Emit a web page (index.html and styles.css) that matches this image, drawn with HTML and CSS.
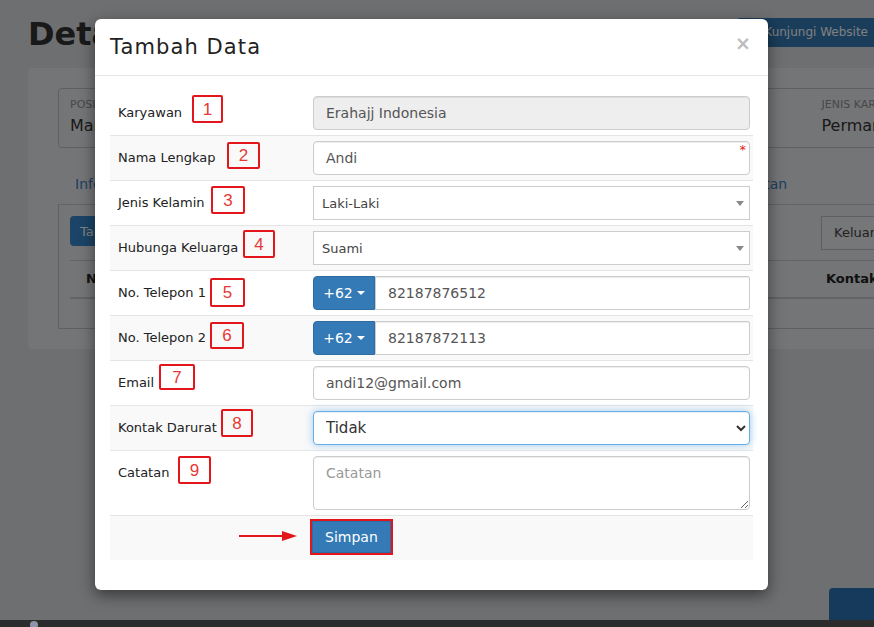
FILE: index.html
```html
<!DOCTYPE html>
<html lang="id">
<head>
<meta charset="utf-8">
<title>Detail Karyawan</title>
<link rel="stylesheet" href="styles.css">
</head>
<body>
<div class="page">
  <div class="page-head">
    <h1 class="page-title">Detail Karyawan</h1>
    <a class="btn-visit">Kunjungi Website</a>
  </div>
  <section class="card">
    <div class="info-box">
      <div class="info-item"><span class="info-label">Posisi</span><span class="info-value">Manager</span></div>
      <div class="info-item"><span class="info-label">Departemen</span><span class="info-value">Operasional</span></div>
      <div class="info-item"><span class="info-label">Tanggal Masuk</span><span class="info-value">01-01-2020</span></div>
      <div class="info-item"><span class="info-label">Jenis Karyawan</span><span class="info-value">Permanen</span></div>
    </div>
    <nav class="tabs">
      <a class="tab">Informasi Pribadi</a>
      <a class="tab">Data Keluarga</a>
      <a class="tab">Pendidikan</a>
      <a class="tab">Pengalaman Kerja</a>
      <a class="tab">Dokumen</a>
      <a class="tab">Catatan</a>
    </nav>
    <div class="tab-panel">
      <div class="panel-toolbar">
        <button class="btn-add" type="button">Tambah Data</button>
        <div class="filter">Keluarga</div>
      </div>
      <table class="data-table">
        <thead>
          <tr><th class="col-no">No</th><th class="col-name">Nama</th><th class="col-rel">Hubungan</th><th class="col-sex">Jenis Kelamin</th><th class="col-contact">Kontak Darurat</th></tr>
        </thead>
        <tbody>
          <tr><td colspan="5"></td></tr>
        </tbody>
      </table>
    </div>
  </section>
  <div class="fab"></div>
</div>

<div class="backdrop"></div>

<div class="modal" role="dialog">
  <div class="modal-header">
    <h4 class="modal-title">Tambah Data</h4>
    <button class="close" type="button">&times;</button>
  </div>
  <div class="modal-body">
    <form class="form-table">
      <div class="form-row">
        <div class="form-label">Karyawan</div>
        <div class="form-field"><input class="form-control" type="text" value="Erahajj Indonesia" disabled></div>
        <span class="mark m1">1</span>
      </div>
      <div class="form-row">
        <div class="form-label">Nama Lengkap</div>
        <div class="form-field"><input class="form-control" type="text" value="Andi"><span class="required">*</span></div>
        <span class="mark m2">2</span>
      </div>
      <div class="form-row">
        <div class="form-label">Jenis Kelamin</div>
        <div class="form-field"><div class="select2"><span>Laki-Laki</span><b class="select2-arrow"></b></div></div>
        <span class="mark m3">3</span>
      </div>
      <div class="form-row">
        <div class="form-label">Hubunga Keluarga</div>
        <div class="form-field"><div class="select2"><span>Suami</span><b class="select2-arrow"></b></div></div>
        <span class="mark m4">4</span>
      </div>
      <div class="form-row">
        <div class="form-label">No. Telepon 1</div>
        <div class="form-field">
          <div class="input-group"><button class="btn-code" type="button">+62<span class="caret"></span></button><input class="form-control" type="text" value="82187876512"></div>
        </div>
        <span class="mark m5">5</span>
      </div>
      <div class="form-row">
        <div class="form-label">No. Telepon 2</div>
        <div class="form-field">
          <div class="input-group"><button class="btn-code" type="button">+62<span class="caret"></span></button><input class="form-control" type="text" value="82187872113"></div>
        </div>
        <span class="mark m6">6</span>
      </div>
      <div class="form-row">
        <div class="form-label">Email</div>
        <div class="form-field"><input class="form-control" type="text" value="andi12@gmail.com"></div>
        <span class="mark m7">7</span>
      </div>
      <div class="form-row">
        <div class="form-label">Kontak Darurat</div>
        <div class="form-field"><select class="form-control is-focused"><option>Tidak</option><option>Ya</option></select></div>
        <span class="mark m8">8</span>
      </div>
      <div class="form-row">
        <div class="form-label">Catatan</div>
        <div class="form-field"><textarea class="form-control notes" placeholder="Catatan"></textarea></div>
        <span class="mark m9">9</span>
      </div>
      <div class="form-row actions">
        <div class="form-label"></div>
        <div class="form-field"><button class="btn-save" type="button">Simpan</button></div>
        <svg class="arrow" width="58" height="12" viewBox="0 0 58 12"><line x1="0" y1="6" x2="45" y2="6" stroke="#e3161b" stroke-width="2"/><polygon points="43,1 58,6 43,11" fill="#e3161b"/></svg>
      </div>
    </form>
  </div>
</div>

<div class="taskbar"><span class="task-icon"></span></div>
</body>
</html>
```

FILE: styles.css
```css
* { box-sizing: border-box; }
html, body { margin: 0; }
body {
  width: 874px;
  height: 627px;
  overflow: hidden;
  position: relative;
  font-family: "DejaVu Sans", sans-serif;
  background: #dcdee2;
}

/* ---------- background page ---------- */
.page { position: relative; height: 100%; }
.page-head { display: flex; align-items: flex-start; padding-top: 14px; }
.page-title {
  margin: 0 0 0 28px;
  font-size: 32px;
  line-height: 40px;
  font-weight: 600;
  color: #333;
  white-space: nowrap;
}
.btn-visit {
  margin-left: auto;
  margin-top: 4px;
  height: 29px;
  line-height: 29px;
  padding: 0 6px 0 27px;
  font-size: 12px;
  color: #fff;
  background: #337ab7;
  border-radius: 3px 0 0 3px;
  white-space: nowrap;
}
.card {
  margin: 14px 0 0 28px;
  width: 1064px;
  background: #e9ebee;
  border-radius: 4px;
  padding: 20px 30px;
}
.info-box {
  display: grid;
  grid-template-columns: repeat(4, 1fr);
  border: 1px solid #bec1c5;
  border-radius: 4px;
}
.info-item { display: flex; flex-direction: column; padding: 9px 11px; }
.info-label { font-size: 11px; line-height: 14px; text-transform: uppercase; color: #8e9094; }
.info-value { margin-top: 2px; font-size: 16px; line-height: 24px; color: #333; }
.tabs {
  display: flex;
  margin-top: 15px;
  border-bottom: 1px solid #c6c9cd;
}
.tab {
  padding: 11px 17px 10px;
  font-size: 14px;
  line-height: 20px;
  color: #3c7fc0;
  white-space: nowrap;
}
.tab-panel {
  border: 1px solid #bec1c5;
  border-top: 0;
  padding: 11px 11px 11px;
}
.panel-toolbar { display: flex; align-items: flex-start; height: 34px; }
.btn-add {
  height: 30px;
  padding: 0 10px;
  background: #3688ce;
  color: #fff;
  border: 0;
  border-radius: 4px;
  font: 13px "DejaVu Sans", sans-serif;
}
.filter {
  margin-left: auto;
  width: 229px;
  height: 34px;
  border: 1px solid #b9bcc0;
  background: #eceef1;
  padding: 0 12px;
  font-size: 13px;
  line-height: 32px;
  color: #444;
}
.data-table {
  width: 100%;
  margin-top: 10px;
  border-collapse: collapse;
  table-layout: fixed;
}
.data-table th {
  padding: 8px;
  font-size: 13px;
  line-height: 20px;
  text-align: left;
  color: #222;
  border-top: 1px solid #c6c9cd;
  border-bottom: 2px solid #c6c9cd;
  white-space: nowrap;
}
.data-table .col-no { width: 52px; text-align: center; }
.data-table .col-name { width: 250px; }
.data-table .col-rel { width: 200px; }
.data-table .col-sex { width: 246px; }
.data-table td { height: 19px; padding: 0; }
.fab {
  position: absolute;
  left: 829px;
  top: 588px;
  width: 60px;
  height: 40px;
  background: #2c74b8;
  border-radius: 4px 0 0 0;
}

/* ---------- backdrop ---------- */
.backdrop {
  position: absolute;
  inset: 0;
  background: rgba(0, 0, 0, 0.5);
  z-index: 10;
}
.taskbar {
  position: absolute;
  left: 0;
  right: 0;
  bottom: 0;
  height: 7px;
  background: #2c2c2c;
  z-index: 30;
}
.task-icon {
  position: absolute;
  left: 30px;
  top: 1px;
  width: 8px;
  height: 8px;
  border-radius: 50%;
  background: #8c96a8;
}

/* ---------- modal ---------- */
.modal {
  position: absolute;
  left: 95px;
  top: 19px;
  width: 673px;
  background: #fff;
  border-radius: 6px;
  box-shadow: 0 5px 15px rgba(0, 0, 0, 0.5);
  z-index: 20;
}
.modal-header {
  display: flex;
  justify-content: space-between;
  align-items: flex-start;
  padding: 15px;
  border-bottom: 1px solid #e5e5e5;
}
.modal-title {
  margin: 0;
  font-size: 21px;
  line-height: 26px;
  font-weight: 400;
  letter-spacing: 1.1px;
  color: #222;
}
.close {
  margin: 0 2px 0 0;
  padding: 0;
  background: none;
  border: 0;
  font: bold 19px/1 "DejaVu Sans", sans-serif;
  color: #bdbdbd;
}
.modal-body { padding: 14px 15px 30px; }

.form-table { margin: 0; }
.form-row {
  position: relative;
  display: grid;
  grid-template-columns: 195px 1fr;
  border-top: 1px solid #e4e4e4;
}
.form-row:first-child { border-top-color: transparent; }
.form-row:nth-child(even) { background: #f9f9f9; }
.form-label {
  padding: 13px 8px;
  font-size: 13px;
  line-height: 18px;
  color: #222;
  white-space: nowrap;
}
.form-field { position: relative; padding: 5px 3px 5px 8px; }
.actions .form-field { padding-bottom: 7px; }

.form-control {
  display: block;
  width: 100%;
  height: 34px;
  padding: 6px 12px;
  font: 14px/20px "DejaVu Sans", sans-serif;
  color: #555;
  background: #fff;
  border: 1px solid #ccc;
  border-radius: 4px;
  box-shadow: inset 0 1px 1px rgba(0, 0, 0, 0.075);
  outline: none;
}
.form-control:disabled {
  background: #eee;
  color: #555;
  -webkit-text-fill-color: #555;
  opacity: 1;
}
.required {
  position: absolute;
  right: 7px;
  top: 7px;
  font-size: 13px;
  line-height: 1;
  color: #dd1a1a;
}

.select2 {
  display: flex;
  align-items: center;
  height: 34px;
  padding: 0 5px 0 8px;
  border: 1px solid #ccc;
  background: #fff;
  font-size: 13px;
  color: #444;
}
.select2-arrow {
  margin-left: auto;
  border-style: solid;
  border-width: 5px 4px 0;
  border-color: #888 transparent transparent;
}

.input-group { display: flex; }
.btn-code {
  flex: 0 0 62px;
  height: 34px;
  display: flex;
  align-items: center;
  justify-content: center;
  gap: 4px;
  padding: 0;
  background: #337ab7;
  border: 1px solid #2e6da4;
  border-radius: 4px 0 0 4px;
  color: #fff;
  font: 14px "DejaVu Sans", sans-serif;
}
.caret {
  border-top: 4px solid #fff;
  border-left: 4px solid transparent;
  border-right: 4px solid transparent;
}
.input-group .form-control { border-radius: 0 2px 2px 0; }

.form-control.is-focused {
  font-size: 15px;
  color: #333;
  padding-left: 8px;
  border-color: #66afe9;
  box-shadow: inset 0 1px 1px rgba(0, 0, 0, 0.075), 0 0 8px rgba(102, 175, 233, 0.6);
}
.notes {
  height: 54px;
  resize: vertical;
}
.notes::placeholder { color: #999; }

.btn-save {
  display: block;
  height: 32px;
  margin-left: -1px;
  padding: 0 12px;
  background: #337ab7;
  border: 1px solid #2e6da4;
  color: #fff;
  font: 14px "DejaVu Sans", sans-serif;
  outline: 2px solid #e3161b;
  outline-offset: 0;
}

/* ---------- annotations ---------- */
.mark {
  position: absolute;
  display: flex;
  align-items: center;
  justify-content: center;
  border: 2px solid #e3161b;
  border-radius: 2px;
  font: 17px/1 "Liberation Sans", sans-serif;
  color: #e53935;
}
.m1 { left: 82px; top: 4px; width: 31px; height: 28px; }
.m2 { left: 117px; top: 6px; width: 33px; height: 27px; }
.m3 { left: 101px; top: 5px; width: 34px; height: 28px; }
.m4 { left: 133px; top: 4px; width: 32px; height: 28px; }
.m5 { left: 100px; top: 7px; width: 35px; height: 29px; }
.m6 { left: 100px; top: 6px; width: 34px; height: 27px; }
.m7 { left: 49px; top: 3px; width: 36px; height: 26px; }
.m8 { left: 111px; top: 3px; width: 32px; height: 28px; }
.m9 { left: 68px; top: 5px; width: 33px; height: 28px; }
.arrow { position: absolute; left: 129px; top: 14px; }
```
